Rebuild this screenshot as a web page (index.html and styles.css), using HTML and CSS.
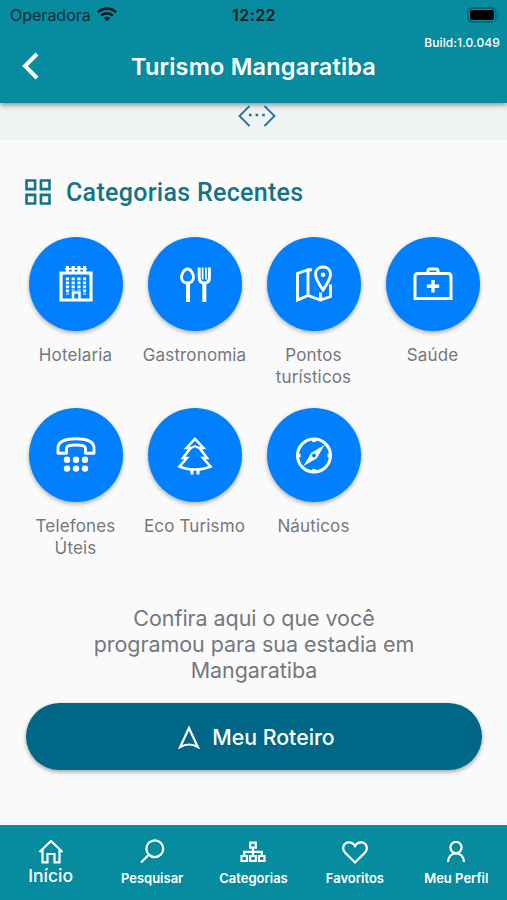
FILE: index.html
```
<!DOCTYPE html>
<html lang="pt-BR">
<head>
    <meta charset="UTF-8">
    <meta name="viewport" content="width=device-width, initial-scale=1">
    <title>Turismo Mangaratiba</title>
    <link rel="stylesheet" href="styles.css">
</head>
<body>
    <!-- Header -->
    <header class="header">
        <div class="status-bar">
            <div class="carrier">
                <span>Operadora</span>
                <svg width="20" height="15" viewBox="0 0 20 15" fill="none" stroke="#021b20" stroke-width="2.6">
                    <path d="M1 5.2a13 13 0 0 1 18 0M4.2 8.6a8.3 8.3 0 0 1 11.6 0"/>
                    <path d="M10 14.3L6.8 11.1a4.6 4.6 0 0 1 6.4 0z" fill="#021b20" stroke="none"/>
                </svg>
            </div>
            <span class="time">12:22</span>
            <svg class="battery" width="33" height="16" viewBox="0 0 33 16">
                <rect x="1" y="1" width="28" height="14" rx="4" fill="none" stroke="#06616e" stroke-width="1.3"/>
                <rect x="3" y="3" width="24" height="10" rx="2" fill="#000"/>
                <path d="M31 6a2.4 2.4 0 0 1 0 4z" fill="#06616e"/>
            </svg>
        </div>
        <span class="build">Build:1.0.049</span>
        <div class="title-bar">
            <svg class="back" width="18" height="28" viewBox="0 0 18 28" fill="none" stroke="#fff" stroke-width="4">
                <path d="M15 2L3 14l12 12"/>
            </svg>
            <h1>Turismo Mangaratiba</h1>
        </div>
    </header>

    <div class="swipe">
        <svg width="38" height="22" viewBox="0 0 38 22" fill="none" stroke="#2a7194" stroke-width="1.8">
            <path d="M11.5 1L1.5 11l10 10M26.5 1l10 10-10 10"/>
            <path d="M11 10h2.6M17.6 10h2.6M24.2 10h2.6" stroke-width="2.4"/>
        </svg>
    </div>

    <main>
        <h2>
            <svg width="26" height="26" viewBox="0 0 26 26" fill="none" stroke="#147487" stroke-width="2.6">
                <path d="M1.5 1.5h8.6v8.6H1.5zM15.9 1.5h8.6v8.6h-8.6zM1.5 15.9h8.6v8.6H1.5zM15.9 15.9h8.6v8.6h-8.6z"/>
            </svg>
            <span>Categorias Recentes</span>
        </h2>

        <!-- Categories -->
        <div class="categories">
            <a class="category">
                <span class="circle">
                    <svg width="40" height="40" viewBox="0 0 40 40" fill="none" stroke="#fff">
                        <path d="M5 9h30v27H5z" stroke-width="3.2"/>
                        <path d="M9 4.8h22" stroke-width="1.8"/>
                        <path d="M11.5 2v6M17.2 2v6M22.9 2v6M28.5 2v6" stroke-width="3"/>
                        <path d="M11.5 13.5v17M17.2 13.5v13M22.9 13.5v13M28.5 13.5v17" stroke-width="3.2" stroke-dasharray="2.7 1.3"/>
                        <path d="M17 36v-7.5h6.5V36" stroke-width="2.5"/>
                    </svg>
                </span>
                <span class="label">Hotelaria</span>
            </a>
            <a class="category">
                <span class="circle">
                    <svg width="40" height="40" viewBox="0 0 40 40" fill="none" stroke="#fff">
                        <path d="M12.5 5c-3.5 0-6 5-6 8.3 0 3.2 2.5 5.7 6 5.7s6-2.5 6-5.7c0-3.300-2.500-8.300-6-8.300z" stroke-width="2.9"/>
                        <path d="M13 19v19M29.300 18v20" stroke-width="4"/>
                        <path d="M24.200 3.500v10c0 3.500 2 5.500 5.100 5.500s5.100-2 5.100-5.500v-10" stroke-width="2.9"/>
                        <path d="M27.600 3.500v12M31 3.500v12" stroke-width="1.7"/>
                    </svg>
                </span>
                <span class="label">Gastronomia</span>
            </a>
            <a class="category">
                <span class="circle">
                    <svg width="40" height="40" viewBox="0 0 40 40" fill="none" stroke="#fff" stroke-width="2.9">
                        <path d="M18 6l-3-.5L3.500 9.500V36L14 31.500 26.500 36l10-3.500v-12M14 5.500v26M26.500 35.500v-7"/>
                        <path d="M29 3c-4.300 0-7.500 3-7.500 7.300 0 5 7.500 15.700 7.500 15.700s7.500-10.700 7.500-15.700C36.500 6 33.300 3 29 3z"/>
                        <circle cx="29" cy="10.800" r="2.300" fill="#fff" stroke="none"/>
                    </svg>
                </span>
                <span class="label">Pontos<br>turísticos</span>
            </a>
            <a class="category">
                <span class="circle">
                    <svg width="40" height="40" viewBox="0 0 40 40" fill="none" stroke="#fff" stroke-width="3">
                        <path d="M2 34.500V12.500q0-3 3-3h30q3 0 3 3v22z"/>
                        <path d="M15 9V7q0-2 2-2h6q2 0 2 2v2"/>
                        <path d="M20 16v12.500M13.800 22.200h12.400" stroke-width="3.4"/>
                    </svg>
                </span>
                <span class="label">Saúde</span>
            </a>
            <a class="category">
                <span class="circle">
                    <svg width="40" height="40" viewBox="0 0 40 40" fill="none" stroke="#fff" stroke-width="2.9">
                        <path d="M2 18.300v-5C2 7 9 3.700 20 3.700S38 7 38 13.300v5h-8.500v-4.300c0-3-2-4-9.500-4s-9.500 1-9.500 4v4.300z" stroke-linejoin="round"/>
                        <g fill="#fff" stroke="none">
                            <circle cx="11" cy="24.800" r="3.200"/><circle cx="20" cy="24.800" r="3.200"/><circle cx="29" cy="24.800" r="3.200"/>
                            <circle cx="11" cy="33.600" r="3.200"/><circle cx="20" cy="33.600" r="3.200"/><circle cx="29" cy="33.600" r="3.200"/>
                        </g>
                    </svg>
                </span>
                <span class="label">Telefones<br>Úteis</span>
            </a>
            <a class="category">
                <span class="circle">
                    <svg width="40" height="40" viewBox="0 0 40 40" fill="none" stroke="#fff" stroke-width="2.5">
                        <path d="M20 3.800l8.500 9.200h-4l7.500 10h-4l7.500 8.500c-9 4-22 4-31 0L12 23H8l7.500-10h-4z"/>
                        <path d="M15 13.500l5-2.500 5 2.500" stroke-width="2"/>
                        <path d="M17 34v5.500M23 34v5.500" stroke-width="3"/>
                    </svg>
                </span>
                <span class="label">Eco Turismo</span>
            </a>
            <a class="category">
                <span class="circle">
                    <svg width="40" height="40" viewBox="0 0 40 40" fill="none" stroke="#fff" stroke-width="3">
                        <circle cx="20" cy="20.500" r="16.500"/>
                        <path d="M20 3.500V7M20 34v3.500M3 20.500h3.500M33.500 20.500H37" stroke-width="3.600"/>
                        <path d="M30.500 10L22.800 23.300 9.500 31l7.700-13.300z" fill="#fff" stroke="none"/>
                        <circle cx="20" cy="20.500" r="2" fill="#0080ff" stroke="none"/>
                    </svg>
                </span>
                <span class="label">Náuticos</span>
            </a>
        </div>

        <p class="intro">Confira aqui o que você<br>programou para sua estadia em<br>Mangaratiba</p>

        <button class="route">
            <svg width="22" height="24" viewBox="0 0 22 24" fill="none" stroke="#fff" stroke-width="2.2">
                <path d="M11 3L2.200 22q8.800-5 17.600 0z"/>
            </svg>
            <span>Meu Roteiro</span>
        </button>
    </main>

    <!-- Bottom navigation -->
    <nav class="tabs">
        <a class="tab active">
            <svg width="26" height="26" viewBox="0 0 26 26" fill="none" stroke="#fff" stroke-width="2.2">
                <path d="M1.500 13L13 2l11.500 11M4.500 11v12.300h5V15h7v8.300h5V11"/>
            </svg>
            <span>Início</span>
        </a>
        <a class="tab">
            <svg width="26" height="26" viewBox="0 0 26 26" fill="none" stroke="#fff" stroke-width="2.2">
                <circle cx="15.800" cy="9.700" r="8.400"/>
                <path d="M9.800 15.700L2 23.500"/>
            </svg>
            <span>Pesquisar</span>
        </a>
        <a class="tab">
            <svg width="26" height="26" viewBox="0 0 26 26" fill="none" stroke="#fff" stroke-width="2.2">
                <path d="M10.200 3.700h5.600v5h-5.600zM1.500 17H7v5H1.500zM10.200 17h5.600v5h-5.600zM19 17h5.500v5H19zM13 8.500V17M4.200 17v-4.200h17.600V17"/>
            </svg>
            <span>Categorias</span>
        </a>
        <a class="tab">
            <svg width="26" height="26" viewBox="0 0 26 26" fill="none" stroke="#fff" stroke-width="2.2">
                <path d="M13 23.500L3.200 13.800C-.5 10 1.200 3.300 7 3.300c3 0 5 1.900 6 3.700 1-1.800 3-3.700 6-3.700 5.800 0 7.500 6.700 3.800 10.500z"/>
            </svg>
            <span>Favoritos</span>
        </a>
        <a class="tab">
            <svg width="26" height="26" viewBox="0 0 26 26" fill="none" stroke="#fff" stroke-width="2.2">
                <circle cx="13" cy="8.500" r="5.600"/>
                <path d="M5 23c0-5 3.500-8.700 8-8.700s8 3.700 8 8.700"/>
            </svg>
            <span>Meu Perfil</span>
        </a>
    </nav>
</body>
</html>
```
FILE: styles.css
```
:root {
    --teal: #078b9f;
    --dark-teal: #006786;
    --blue: #0080ff;
    --grey: #75777d;
}

* {
    box-sizing: border-box;
}

body {
    margin: 0;
    height: 900px;
    display: flex;
    flex-direction: column;
    overflow: hidden;
    background: #fafafa;
    font-family: Inter, "Liberation Sans", sans-serif;
}

svg {
    display: block;
    flex-shrink: 0;
}

.header {
    position: relative;
    height: 103px;
    background: var(--teal);
    color: #fff;
    box-shadow: 0 2px 5px rgba(0, 0, 0, 0.4);
}

.status-bar {
    display: grid;
    grid-template-columns: 1fr auto 1fr;
    align-items: center;
    height: 29px;
    padding: 0 7px 0 10px;
    color: #042f38;
    font-size: 16px;
}

.carrier {
    display: flex;
    align-items: center;
    gap: 6px;
}

.time {
    color: #021b20;
    font-weight: 600;
    letter-spacing: 0.4px;
    margin-right: 2px;
}

.battery {
    justify-self: end;
}

/* sits above the title, in the corner */
.build {
    position: absolute;
    top: 35px;
    right: 7px;
    font-size: 12px;
    font-weight: 500;
    line-height: 15px;
    letter-spacing: 0.1px;
}

.title-bar {
    display: grid;
    grid-template-columns: 18px 1fr 18px;
    align-items: center;
    height: 74px;
    padding: 0 22px;
}

h1 {
    margin: 0;
    text-align: center;
    font-size: 23.5px;
    font-weight: 600;
    letter-spacing: 0.2px;
}

.swipe {
    display: flex;
    justify-content: center;
    height: 37px;
    padding: 2px 0 0 6px;
    background: #eef2f3;
}

main {
    flex: 1;
}

h2 {
    display: flex;
    align-items: center;
    gap: 15px;
    margin: 37px 0 0 25px;
    height: 30px;
    color: #147487;
    font-family: Roboto, sans-serif;
    font-size: 25px;
    font-weight: 500;
    letter-spacing: 0.3px;
}

.categories {
    display: grid;
    grid-template-columns: repeat(4, 119px);
    grid-auto-rows: 171px;
    justify-content: center;
    margin-top: 30px;
    padding-left: 1px;
}

.category {
    display: flex;
    flex-direction: column;
    align-items: center;
    gap: 14px;
}

.circle {
    display: grid;
    place-items: center;
    width: 94px;
    height: 94px;
    border-radius: 50%;
    background: var(--blue);
    box-shadow: 0 2px 4px rgba(0, 0, 0, 0.3);
}

.label {
    color: var(--grey);
    text-align: center;
    font-size: 17px;
    line-height: 21.5px;
    letter-spacing: 0.15px;
}

.intro {
    margin: 27px 0 0;
    padding-left: 1px;
    text-align: center;
    color: var(--grey);
    font-size: 21.5px;
    line-height: 25.8px;
    letter-spacing: -0.06px;
}

.route {
    display: flex;
    align-items: center;
    justify-content: center;
    gap: 12px;
    width: 456px;
    height: 67px;
    margin: 20px 0 0 26px;
    padding: 0 0 0 5px;
    border: none;
    border-radius: 34px;
    background: var(--dark-teal);
    color: #fff;
    box-shadow: 0 2px 4px rgba(0, 0, 0, 0.35);
    font-family: inherit;
    font-size: 21.3px;
    font-weight: 500;
}

.tabs {
    display: grid;
    grid-template-columns: repeat(5, 1fr);
    height: 75px;
    padding-top: 14px;
    background: var(--teal);
    color: #fff;
}

.tab {
    display: flex;
    flex-direction: column;
    align-items: center;
    gap: 4px;
    font-size: 13px;
    font-weight: 600;
    line-height: 18px;
}

.tab.active {
    gap: 2px;
    font-size: 17.5px;
    font-weight: 500;
}
```
